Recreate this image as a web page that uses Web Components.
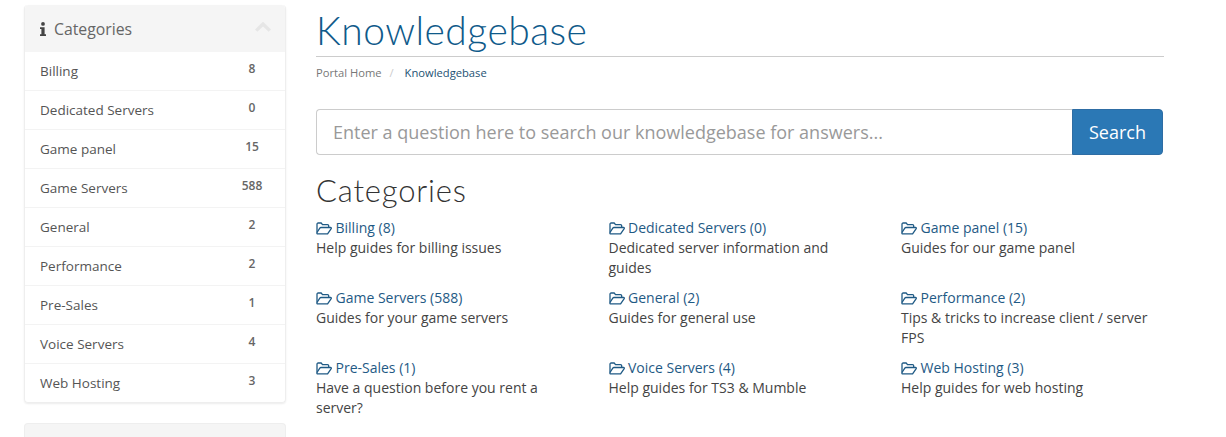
<!DOCTYPE html>
<html>
<head>
<meta charset="utf-8">
<title>Knowledgebase</title>
<style>
  body {
    margin: 0;
    background: #fff;
    color: #333;
    font-family: "Open Sans", sans-serif;
    font-size: 14px;
    line-height: 20px;
    height: 437px;
    overflow: hidden;
  }
</style>
</head>
<body>
<kb-page>
  <kb-sidebar slot="side">
    <kb-side-item name="Billing" count="8"></kb-side-item>
    <kb-side-item name="Dedicated Servers" count="0"></kb-side-item>
    <kb-side-item name="Game panel" count="15"></kb-side-item>
    <kb-side-item name="Game Servers" count="588"></kb-side-item>
    <kb-side-item name="General" count="2"></kb-side-item>
    <kb-side-item name="Performance" count="2"></kb-side-item>
    <kb-side-item name="Pre-Sales" count="1"></kb-side-item>
    <kb-side-item name="Voice Servers" count="4"></kb-side-item>
    <kb-side-item name="Web Hosting" count="3"></kb-side-item>
  </kb-sidebar>
  <kb-title slot="main"></kb-title>
  <kb-search slot="main"></kb-search>
  <kb-categories slot="main">
    <kb-category name="Billing (8)">Help guides for billing issues</kb-category>
    <kb-category name="Dedicated Servers (0)">Dedicated server information and guides</kb-category>
    <kb-category name="Game panel (15)">Guides for our game panel</kb-category>
    <kb-category name="Game Servers (588)">Guides for your game servers</kb-category>
    <kb-category name="General (2)">Guides for general use</kb-category>
    <kb-category name="Performance (2)">Tips &amp; tricks to increase client / server FPS</kb-category>
    <kb-category name="Pre-Sales (1)">Have a question before you rent a server?</kb-category>
    <kb-category name="Voice Servers (4)">Help guides for TS3 &amp; Mumble</kb-category>
    <kb-category name="Web Hosting (3)">Help guides for web hosting</kb-category>
  </kb-categories>
</kb-page>

<script>
(function() {
  const headingFont = '"Lato", "Open Sans", sans-serif';

  class KbPage extends HTMLElement {
    constructor() {
      super();
      this.attachShadow({ mode: 'open' });
      this.shadowRoot.innerHTML = `
        <style>
        :host {
            display: flex;
            align-items: flex-start;
            padding: 5px 0 0 24px;
            gap: 30px;
        }
        .side { width: 262px; flex: none; }
        .main { width: 848px; flex: none; }
        </style>
        <div class="side"><slot name="side"></slot></div>
        <div class="main"><slot name="main"></slot></div>
      `;
    }
  }

  class KbSidebar extends HTMLElement {
    constructor() {
      super();
      this.attachShadow({ mode: 'open' });
      this.shadowRoot.innerHTML = `
        <style>
        :host { display: block; }
        .panel {
            border: 1px solid #eee;
            border-top: none;
            border-radius: 4px;
            box-shadow: 0 1px 2px rgba(0, 0, 0, 0.08);
            margin-bottom: 20px;
        }
        .head {
            display: flex;
            align-items: center;
            height: 47px;
            padding: 0 14px 0 15px;
            background: #f5f5f5;
            border-radius: 4px 4px 0 0;
            color: #666;
            font-size: 15.8px;
        }
        .head svg.info { width: 6px; height: 14px; margin-right: 8px; fill: #444; }
        .head span { flex: 1; }
        .head svg.chev { width: 16px; height: 10px; fill: none; stroke: #e6e6e6; stroke-width: 3.4; margin-top: -4px; }
        .next {
            height: 14px;
            box-sizing: border-box;
            background: #f5f5f5;
            border-radius: 4px 4px 0 0;
            border: 1px solid #eee;
            border-bottom: none;
        }
        </style>
        <div class="panel">
          <div class="head">
            <svg class="info" viewBox="0 0 6 14"><circle cx="3" cy="1.9" r="1.9"/><path d="M0 5.2h4.6v7h1.4V14H0v-1.8h1.4V7H0z"/></svg>
            <span>Categories</span>
            <svg class="chev" viewBox="0 0 16 10"><path d="M1.2 8.6 8 2l6.8 6.6"/></svg>
          </div>
          <slot></slot>
        </div>
        <div class="next"></div>
      `;
    }
  }

  class KbSideItem extends HTMLElement {
    constructor() {
      super();
      this.attachShadow({ mode: 'open' });
      this.shadowRoot.innerHTML = `
        <style>
        :host {
            display: flex;
            justify-content: space-between;
            align-items: center;
            height: 38px;
            padding: 0 15px;
            border-bottom: 1px solid #f3f3f3;
            color: #555;
            font-size: 13.5px;
        }
        :host(:last-child) { border-bottom: none; }
        b {
            font-weight: 600;
            font-size: 12px;
            line-height: 1;
            margin-top: -5px;
            min-width: 30px;
            text-align: center;
            margin-right: 3px;
            color: #666;
        }
        </style>
        <span>${this.getAttribute('name')}</span>
        <b>${this.getAttribute('count')}</b>
      `;
    }
  }

  class KbTitle extends HTMLElement {
    constructor() {
      super();
      this.attachShadow({ mode: 'open' });
      this.shadowRoot.innerHTML = `
        <style>
        :host { display: block; }
        h1 {
            margin: 0;
            height: 51px;
            border-bottom: 1px solid #ccc;
            color: #0f5a8a;
            font: 300 39px/50px ${headingFont};
            letter-spacing: 0.47px;
        }
        .crumbs {
            display: flex;
            margin-top: 6px;
            font-size: 11.2px;
            line-height: 20px;
            color: #777;
        }
        .sep { color: #ccc; margin: 0 8px; }
        .here { color: #1d5273; }
        </style>
        <h1>Knowledgebase</h1>
        <div class="crumbs">
          <span>Portal Home</span><span class="sep">/</span><span class="here">&nbsp;Knowledgebase</span>
        </div>
      `;
    }
  }

  class KbSearch extends HTMLElement {
    constructor() {
      super();
      this.attachShadow({ mode: 'open' });
      this.shadowRoot.innerHTML = `
        <style>
        :host {
            display: flex;
            margin-top: 26px;
            width: 847px;
            height: 46px;
        }
        input {
            flex: 1;
            min-width: 0;
            box-sizing: border-box;
            border: 1px solid #ccc;
            border-right: none;
            border-radius: 4px 0 0 4px;
            padding: 0 16px;
            font: 18px "Open Sans", sans-serif;
            color: #555;
        }
        input::placeholder { color: #999; opacity: 1; }
        button {
            width: 91px;
            border: 1px solid #2e6da4;
            border-radius: 0 4px 4px 0;
            background: #2b78b5;
            color: #fff;
            font: 18px "Open Sans", sans-serif;
            padding: 0;
        }
        </style>
        <input type="text" placeholder="Enter a question here to search our knowledgebase for answers...">
        <button>Search</button>
      `;
    }
  }

  class KbCategories extends HTMLElement {
    constructor() {
      super();
      this.attachShadow({ mode: 'open' });
      this.shadowRoot.innerHTML = `
        <style>
        :host { display: block; }
        h2 {
            margin: 16px 0 0;
            height: 47px;
            color: #333;
            font: 300 31px/38px ${headingFont};
            letter-spacing: 0.8px;
        }
        .grid {
            display: grid;
            grid-template-columns: repeat(3, 262.5px);
            column-gap: 30px;
            row-gap: 10px;
            grid-auto-rows: 60px;
        }
        </style>
        <h2>Categories</h2>
        <div class="grid"><slot></slot></div>
      `;
    }
  }

  class KbCategory extends HTMLElement {
    constructor() {
      super();
      this.attachShadow({ mode: 'open' });
      this.shadowRoot.innerHTML = `
        <style>
        :host { display: block; color: #444; }
        a {
            display: flex;
            align-items: center;
            color: #1f5a85;
            text-decoration: none;
        }
        svg {
            width: 16px;
            height: 13px;
            margin-right: 4px;
            fill: none;
            stroke: #1f5a85;
            stroke-width: 1.3;
            stroke-linejoin: round;
        }
        span { margin-left: -0.5px; }
        </style>
        <a href="#">
          <svg viewBox="0 0 16 13"><path d="M1 10.5V2.2C1 1.5 1.5 1 2.2 1h3l1.3 1.6h5c.7 0 1.2.5 1.2 1.2v1.6"/><path d="M1.2 11.8h10.4l3.6-5.2c.3-.5 0-1.1-.7-1.1H5c-.5 0-.9.2-1.2.6L1 10.5c-.3.6 0 1.3.2 1.3z"/></svg>
          <span>${this.getAttribute('name')}</span>
        </a>
        <div><slot></slot></div>
      `;
    }
  }

  customElements.define('kb-page', KbPage);
  customElements.define('kb-sidebar', KbSidebar);
  customElements.define('kb-side-item', KbSideItem);
  customElements.define('kb-title', KbTitle);
  customElements.define('kb-search', KbSearch);
  customElements.define('kb-categories', KbCategories);
  customElements.define('kb-category', KbCategory);
})();
</script>
</body>
</html>
